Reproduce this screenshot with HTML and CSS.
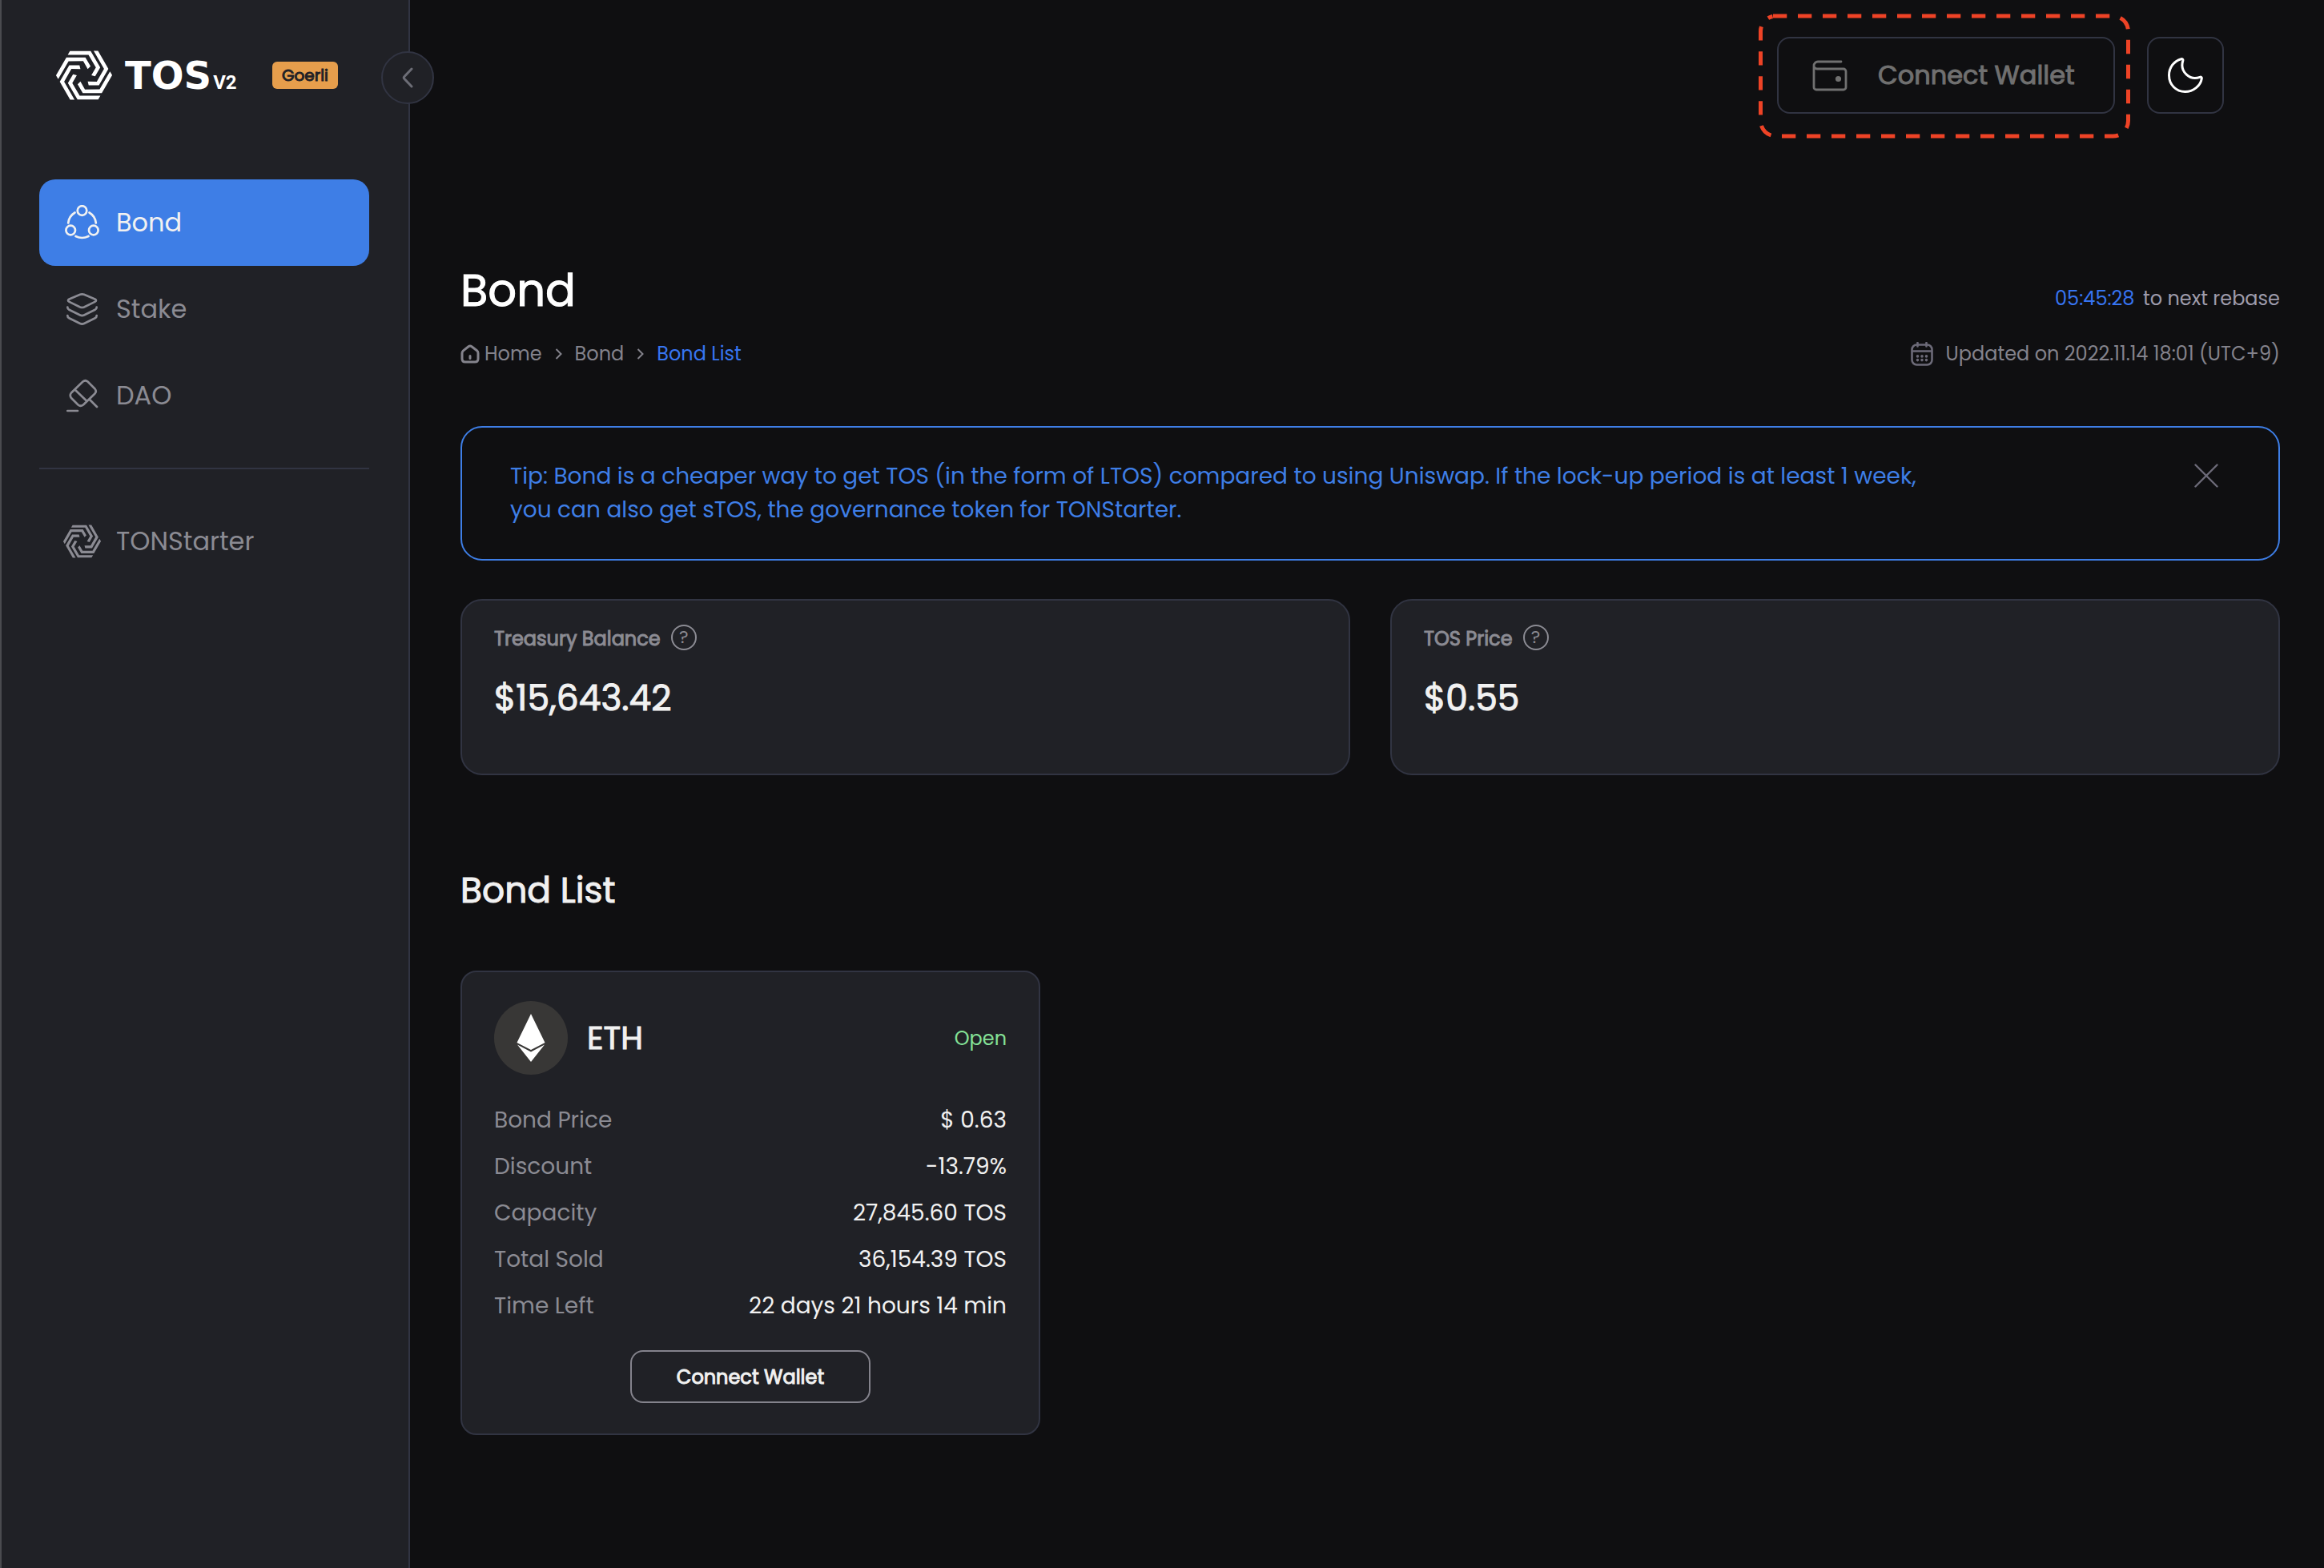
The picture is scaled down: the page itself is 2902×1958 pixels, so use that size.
FILE: index.html
```html
<!DOCTYPE html>
<html lang="en">
<head>
<meta charset="utf-8">
<meta name="viewport" content="width=device-width, initial-scale=1">
<title>Bond | TOS V2</title>
<link rel="stylesheet" href="styles.css">
</head>
<body>
<svg class="defs" width="0" height="0" aria-hidden="true">
  <defs>
    <path id="strand" d="M-52.500-90H24.500L60-29 41 4 27 0 43.800-29 16.400-76H-60.600Z"/>
    <symbol id="ton-mark" viewBox="-104 -92 208 184">
      <use href="#strand"/>
      <use href="#strand" transform="rotate(60)"/>
      <use href="#strand" transform="rotate(120)"/>
      <use href="#strand" transform="rotate(180)"/>
      <use href="#strand" transform="rotate(240)"/>
      <use href="#strand" transform="rotate(300)"/>
    </symbol>
  </defs>
</svg>
<div class="layout">
  <aside class="sidebar">
    <div class="brand">
      <a class="brand-link" href="#" aria-label="TOS V2">
        <svg class="brand-mark" width="70" height="62" fill="currentColor" aria-hidden="true"><use href="#ton-mark"/></svg>
        <span class="wordmark">TOS<span class="version">V2</span></span>
      </a>
      <span class="badge">Goerli</span>
    </div>
    <button class="collapse" type="button" aria-label="Collapse sidebar">
      <svg width="14" height="26" viewBox="0 0 14 26" fill="none" stroke="currentColor" stroke-width="3" stroke-linecap="round" stroke-linejoin="round"><path d="M12 2 3 11.500q-1.500 1.500 0 3L12 24"/></svg>
    </button>
    <nav class="nav">
      <a class="nav-link active" href="#">
        <svg class="nav-icon" width="47" height="44" viewBox="-2 0 47 44" fill="none" stroke="currentColor" stroke-width="2.700" stroke-linecap="round"><circle cx="21.500" cy="7" r="5.800"/><circle cx="7.200" cy="31.500" r="5.800"/><circle cx="35.800" cy="31.500" r="5.800"/><path d="M12.500 9.500Q5 14 4.200 22.500M30.500 9.500Q38 14 38.800 22.500M13.500 39q8 4 16 0"/></svg>
        Bond
      </a>
      <a class="nav-link" href="#">
        <svg class="nav-icon" width="47" height="44" viewBox="-4 -2 47 44" fill="none" stroke="currentColor" stroke-width="2.700" stroke-linecap="round" stroke-linejoin="round"><path d="M17 1.800q2.500-1 5 0l13.500 5.700q3 1.700 0 3.400L22 17.500q-2.500 1-5 0L3.500 10.900q-3-1.700 0-3.400zM1.300 17.500q0 2.200 2 3.200L17 27.500q2.500 1.200 5 0l13.700-6.800q2-1 2-3.200M1.300 28q0 2.200 2 3.200L17 38q2.500 1.200 5 0l13.700-6.800q2-1 2-3.200"/></svg>
        Stake
      </a>
      <a class="nav-link" href="#">
        <svg class="nav-icon" width="47" height="44" viewBox="-4 -2 47 44" fill="none" stroke="currentColor" stroke-width="2.700" stroke-linecap="round" stroke-linejoin="round"><path d="M20.500 2.500q3-2.500 6 0l9 9q2.500 3 0 6l-14.500 14q-3.500 2.500-6.500 0l-8.500-8.500q-2.500-3.500 0-6.500zM11 13l13.500 13M28.500 24.500 38 34M1.300 39H14"/></svg>
        DAO
      </a>
      <hr class="nav-divider">
      <a class="nav-link" href="#">
        <svg class="nav-icon" width="47" height="42" fill="currentColor"><use href="#ton-mark"/></svg>
        TONStarter
      </a>
    </nav>
  </aside>

  <main class="main">
    <header class="topbar">
      <div class="connect-wrap">
        <button class="connect" type="button">
          <svg width="44" height="39" viewBox="0 0 44 39" fill="none" stroke="currentColor" stroke-width="2.800" stroke-linecap="round"><path d="M36 2H7a5 5 0 0 0-5 5v27a3 3 0 0 0 3 3h34a3 3 0 0 0 3-3V14a3 3 0 0 0-3-3H6a4 4 0 0 1-4-4"/><circle cx="32.500" cy="23.500" r="3.600" fill="currentColor" stroke="none"/></svg>
          Connect Wallet
        </button>
        <svg class="highlight" width="464" height="156" viewBox="0 0 464 156" fill="none" stroke="#ee4326" stroke-width="5" stroke-dasharray="17.300 13.700" aria-hidden="true"><path d="M18 3H442.500a19 19 0 0 1 19 19V134a19 19 0 0 1-19 19H21.500a19 19 0 0 1-19-19V22a19 19 0 0 1 15-18.500"/></svg>
      </div>
      <button class="theme" type="button" aria-label="Dark mode">
        <svg width="44" height="44" viewBox="0 0 44 44" fill="none" stroke="currentColor" stroke-width="3" stroke-linejoin="round"><path d="M16.500 1.700C8 4 1.500 12 1.500 22c0 12 9 20.500 20 20.500C32 42.500 41 35 42.300 26c.2-1.600-.8-2.200-2.300-1.700C28 29 14.500 18 18.800 3.700c.5-1.600-.8-2.500-2.300-2z"/></svg>
      </button>
    </header>

    <section class="page-head">
      <div>
        <h1>Bond</h1>
        <nav class="crumbs" aria-label="Breadcrumb">
          <a class="home" href="#"><svg width="24" height="24" viewBox="0 0 24 24" fill="none" stroke="currentColor" stroke-width="3" stroke-linecap="round" stroke-linejoin="round"><path d="M2 11q0-2 1.500-3.200l6.500-5q2-1.500 4 0l6.500 5Q22 9 22 11v7q0 4-4 4H6q-4 0-4-4zM12 14.500v3"/></svg>Home</a>
          <svg class="sep" width="9" height="14" viewBox="0 0 9 14" fill="none" stroke="currentColor" stroke-width="2"><path d="m1.500 1 6 6-6 6"/></svg>
          <a href="#">Bond</a>
          <svg class="sep" width="9" height="14" viewBox="0 0 9 14" fill="none" stroke="currentColor" stroke-width="2"><path d="m1.500 1 6 6-6 6"/></svg>
          <a class="current" href="#" aria-current="page">Bond List</a>
        </nav>
      </div>
      <div class="status">
        <p class="rebase"><time>05:45:28</time> to next rebase</p>
        <p class="updated"><svg width="28" height="30" viewBox="0 0 28 30" fill="none" stroke="currentColor" stroke-width="2.600" stroke-linecap="round"><rect x="1.500" y="3.500" width="25" height="25" rx="6"/><path d="M2 11.500h24M8.500 1v4.500M19.500 1v4.500"/><path d="M8.500 17.800v.1M14 17.800v.1M19.500 17.800v.1M8.500 22.500v.1M14 22.500v.1M19.500 22.500v.1" stroke-width="3.600"/></svg>Updated on 2022.11.14 18:01 (UTC+9)</p>
      </div>
    </section>

    <section class="tip">
      <p>Tip: Bond is a cheaper way to get TOS (in the form of LTOS) compared to using Uniswap. If the lock-up period is at least 1 week,<br>you can also get sTOS, the governance token for TONStarter.</p>
      <button class="close" type="button" aria-label="Dismiss tip">
        <svg width="30" height="30" viewBox="0 0 30 30" fill="none" stroke="currentColor" stroke-width="2.400" stroke-linecap="round"><path d="m1.500 1.500 27 27M28.500 1.500l-27 27"/></svg>
      </button>
    </section>

    <section class="stats">
      <article class="stat">
        <h2>Treasury Balance <button class="help" type="button" aria-label="About Treasury Balance">?</button></h2>
        <p>$15,643.42</p>
      </article>
      <article class="stat">
        <h2>TOS Price <button class="help" type="button" aria-label="About TOS Price">?</button></h2>
        <p>$0.55</p>
      </article>
    </section>

    <h2 class="section-title">Bond List</h2>
    <section class="bonds">
      <article class="bond">
        <header class="bond-head">
          <svg width="92" height="92" viewBox="0 0 92 92" aria-hidden="true"><circle cx="46" cy="46" r="46" fill="#383736"/><path fill="#fff" d="M46 16 63.500 52 46 61 28.500 52zM29 54.500 46 63.500 63 54.500 46 76z"/></svg>
          <h3>ETH</h3>
          <span class="open">Open</span>
        </header>
        <dl>
          <div><dt>Bond Price</dt><dd>$ 0.63</dd></div>
          <div><dt>Discount</dt><dd>-13.79%</dd></div>
          <div><dt>Capacity</dt><dd>27,845.60 TOS</dd></div>
          <div><dt>Total Sold</dt><dd>36,154.39 TOS</dd></div>
          <div><dt>Time Left</dt><dd>22 days 21 hours 14 min</dd></div>
        </dl>
        <button class="bond-action" type="button">Connect Wallet</button>
      </article>
    </section>
  </main>
</div>
</body>
</html>
```
FILE: styles.css
```css
:root {
  --bg: #0f0f11;
  --panel: #202126;
  --line: #313442;
  --muted: #8b8b93;
  --text: #f1f1f1;
  --blue: #3e7ee6;
}

* { box-sizing: border-box; }

body {
  margin: 0;
  background: var(--bg);
  color: var(--text);
  font-family: Poppins, Inter, "Liberation Sans", sans-serif;
  font-size: 28px;
}

h1, h2, h3, p, dl, dd { margin: 0; font-weight: 400; }
a { color: inherit; text-decoration: none; }
button { padding: 0; background: none; border: 0; color: inherit; font: inherit; cursor: pointer; }
svg { display: block; flex: none; }
.defs { position: absolute; }

/* Regular weight, thickened by an outline in the text's own colour */
h1, h3, .section-title, .stat h2, .stat p, .badge, .connect, .bond-action {
  -webkit-text-stroke: 1px currentColor;
}

.layout { display: flex; min-height: 100vh; }

/* Sidebar */
.sidebar {
  position: relative;
  flex: none;
  width: 512px;
  padding: 63px 49px 0 47px;
  background: var(--panel);
  border-left: 2px solid #4a4b4f;
  border-right: 2px solid var(--line);
}
.brand { display: flex; align-items: center; height: 62px; padding: 0 39px 0 21px; }
.brand-link { display: flex; align-items: center; gap: 16px; color: #fff; }
.wordmark { font: 700 48px/62px "DejaVu Sans", sans-serif; }
.version { margin-left: 2px; font: 700 24px/24px Roboto, sans-serif; }
.badge {
  margin-left: auto;
  padding: 0 12px;
  border-radius: 6px;
  background: #e69e4c;
  color: var(--panel);
  font-size: 20px;
  line-height: 34px;
}
.collapse {
  position: absolute;
  top: 64px;
  right: -32px;
  display: grid;
  place-items: center;
  width: 66px;
  height: 66px;
  border: 2px solid var(--line);
  border-radius: 50%;
  background: var(--panel);
  color: #6c6d76;
}
.nav { margin-top: 99px; }
.nav-link {
  display: flex;
  align-items: center;
  gap: 19px;
  height: 108px;
  padding-left: 30px;
  border-radius: 20px;
  color: var(--muted);
  font-size: 32px;
}
.nav-link.active { background: var(--blue); color: var(--text); }
.nav-divider { height: 2px; margin: 36px 0; border: 0; background: var(--line); }

/* Main column */
.main { flex: 1; min-width: 0; padding: 46px 55px 80px 63px; }

.topbar { display: flex; justify-content: flex-end; gap: 40px; padding-right: 70px; }
.connect-wrap { position: relative; }
.connect {
  display: flex;
  align-items: center;
  gap: 38px;
  width: 422px;
  height: 96px;
  padding-left: 42px;
  border: 2px solid var(--line);
  border-radius: 16px;
  color: #707070;
  font-size: 32px;
}
.highlight { position: absolute; top: -29px; left: -23px; pointer-events: none; }
.theme {
  display: grid;
  place-items: center;
  width: 96px;
  height: 96px;
  border: 2px solid var(--line);
  border-radius: 16px;
  color: #fff;
}

.page-head { display: flex; justify-content: space-between; align-items: flex-end; margin-top: 189px; }
h1 { color: #fff; font-size: 56px; line-height: 64px; }
.crumbs { display: flex; align-items: center; margin-top: 29px; color: #84838c; font-size: 24px; line-height: 36px; }
.home { display: flex; align-items: center; gap: 6px; }
.sep { margin: 0 16px; }
.current { color: #3775f1; }
.status { color: #84838c; font-size: 24px; line-height: 36px; text-align: right; }
.rebase { color: #9d9bab; }
.rebase time { margin-right: 4px; color: #3775f1; }
.updated { display: flex; align-items: center; justify-content: flex-end; gap: 16px; margin-top: 33px; }
.updated svg { color: #6c6a78; }

.tip {
  display: flex;
  justify-content: space-between;
  align-items: flex-start;
  margin-top: 72px;
  padding: 40px 75px 40px 60px;
  border: 2px solid var(--blue);
  border-radius: 27px;
  color: var(--blue);
  font-size: 28px;
  line-height: 42px;
}
.close { margin-top: 5px; color: #6c6a78; }

.stats { display: grid; grid-template-columns: 1fr 1fr; gap: 50px; margin-top: 48px; }
.stat {
  min-height: 220px;
  padding: 30px 40px;
  border: 2px solid var(--line);
  border-radius: 27px;
  background: var(--panel);
}
.stat h2 { display: flex; align-items: flex-start; gap: 13px; color: var(--muted); font-size: 24px; line-height: 36px; }
.help {
  width: 32px;
  height: 32px;
  border: 2px solid currentColor;
  border-radius: 50%;
  font-size: 22px;
  line-height: 28px;
  -webkit-text-stroke: 0;
}
.stat p { margin-top: 30px; font-size: 44px; line-height: 52px; }

.section-title { margin-top: 118px; font-size: 44px; line-height: 52px; }

.bonds { display: grid; grid-template-columns: repeat(3, 1fr); gap: 50px; margin-top: 74px; }
.bond {
  padding: 36px 40px 38px;
  border: 2px solid var(--line);
  border-radius: 20px;
  background: var(--panel);
}
.bond-head { display: flex; align-items: center; }
.bond-head h3 { margin-left: 24px; font-size: 40px; }
.open { margin-left: auto; color: #84e297; font-size: 24px; }
.bond dl { margin-top: 28px; font-size: 28px; line-height: 58px; }
.bond dl div { display: flex; justify-content: space-between; }
.bond dt { color: var(--muted); }
.bond-action {
  display: block;
  width: 300px;
  height: 66px;
  margin: 26px auto 0;
  border: 2px solid #84838c;
  border-radius: 16px;
  font-size: 24px;
}
```
